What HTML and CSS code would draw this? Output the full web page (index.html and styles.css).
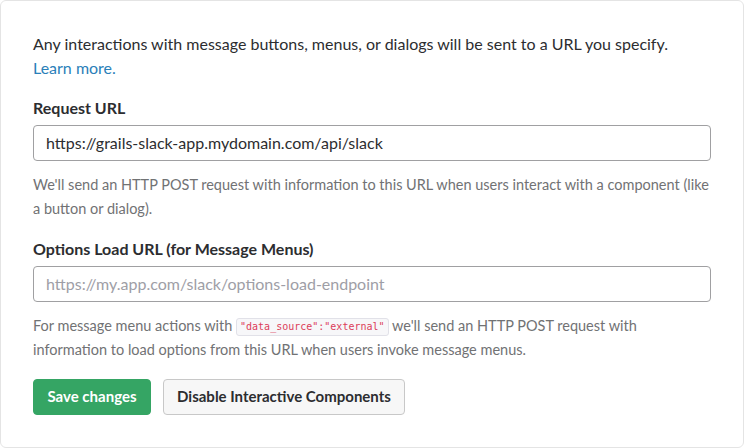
FILE: index.html
```html
<!DOCTYPE html>
<html>
<head>
<meta charset="utf-8">
<link rel="stylesheet" href="styles.css">
</head>
<body>
<div class="card">
  <p class="intro">Any interactions with message buttons, menus, or dialogs will be sent to a URL you specify. <a class="link" href="#">Learn more.</a></p>
  <div class="field">
    <label class="label">Request URL</label>
    <div class="input">https://grails-slack-app.mydomain.com/api/slack</div>
    <p class="help">We'll send an HTTP POST request with information to this URL when users interact with a component (like a button or dialog).</p>
  </div>
  <div class="field">
    <label class="label">Options Load URL (for Message Menus)</label>
    <div class="input placeholder">https://my.app.com/slack/options-load-endpoint</div>
    <p class="help">For message menu actions with <code class="code">"data_source":"external"</code> we'll send an HTTP POST request with information to load options from this URL when users invoke message menus.</p>
  </div>
  <div class="actions">
    <button class="btn btn-primary">Save changes</button>
    <button class="btn btn-outline">Disable Interactive Components</button>
  </div>
</div>
</body>
</html>
```
FILE: styles.css
```css
html, body {
  margin: 0;
  padding: 0;
  background: #ffffff;
}
body {
  font-family: Lato, "Open Sans", sans-serif;
  color: #2c2d30;
}
.card {
  box-sizing: border-box;
  width: 744px;
  height: 448px;
  border: 1px solid #e4e4e4;
  border-radius: 6px;
  padding: 31px 32px 32px 32px;
}
.intro {
  margin: 0;
  font-size: 16px;
  line-height: 24px;
}
.link {
  color: #2a80b9;
  text-decoration: none;
  white-space: nowrap;
}
.field {
  margin-top: 16px;
}
.label {
  display: block;
  font-size: 16px;
  font-weight: 700;
  line-height: 24px;
  margin-bottom: 5px;
}
.input {
  box-sizing: border-box;
  height: 36px;
  border: 1px solid #a0a0a2;
  border-radius: 4px;
  padding: 0 12px;
  font-size: 16px;
  line-height: 34px;
  color: #2c2d30;
}
.input.placeholder {
  color: #9e9ea6;
}
.help {
  margin: 12px 0 0 0;
  font-size: 14.5px;
  line-height: 24px;
  color: #717274;
}
.code {
  display: inline-block;
  vertical-align: 1px;
  font-family: "DejaVu Sans Mono", "Liberation Mono", monospace;
  font-size: 10px;
  line-height: 14px;
  color: #dc3d5a;
  background: #f7f7f9;
  border: 1px solid #e1e1e8;
  border-radius: 3px;
  padding: 1px 3px;
}
.actions {
  display: flex;
  gap: 12px;
  margin-top: 17px;
}
.btn {
  box-sizing: border-box;
  height: 36px;
  border-radius: 4px;
  font-family: Lato, "Open Sans", sans-serif;
  font-size: 15px;
  font-weight: 700;
  padding: 0 13px 3px;
  cursor: pointer;
}
.btn-primary {
  width: 118px;
  background: #35a564;
  border: 1px solid #35a564;
  color: #ffffff;
}
.btn-outline {
  width: 242px;
  background: #f7f7f7;
  border: 1px solid #c8c8c8;
  color: #2c2d30;
}
```
